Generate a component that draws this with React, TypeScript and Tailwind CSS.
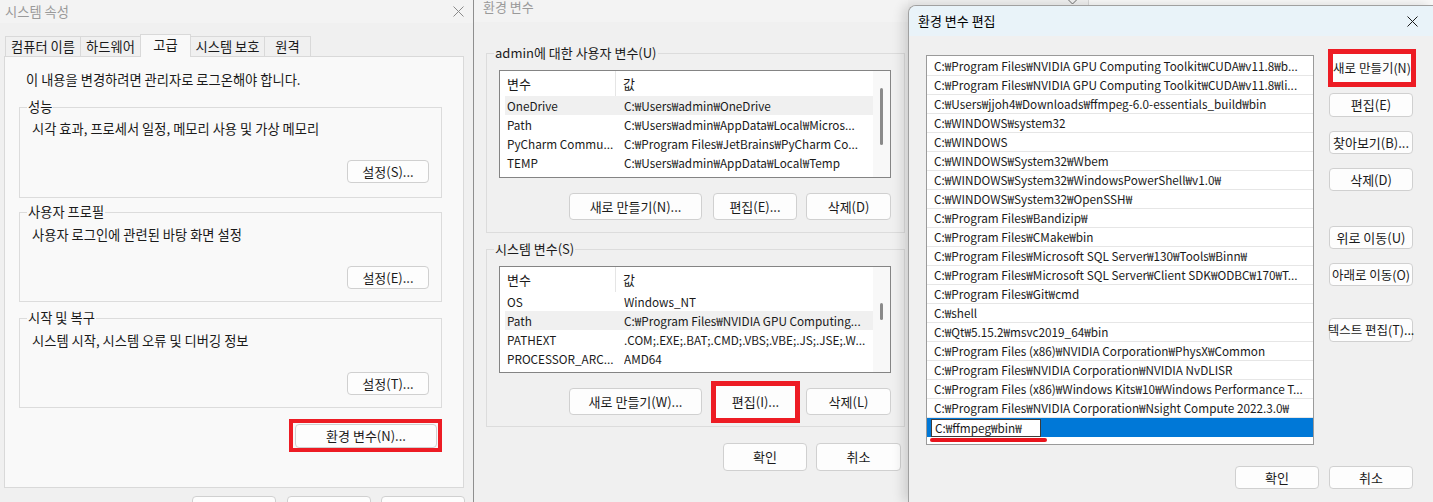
import React from "react";

type C = { className?: string; children?: React.ReactNode };

function Btn({ className = "", children }: C) {
  return (
    <div
      className={
        "flex shrink-0 items-center justify-center whitespace-nowrap rounded-[4px] border border-[#d0d0d0] bg-[#fdfdfd] leading-[18px] " +
        className
      }
    >
      {children}
    </div>
  );
}

function CloseX({ size, color }: { size: number; color: string }) {
  return (
    <svg width={size} height={size} viewBox="0 0 11 11" fill="none">
      <path d="M0.5 0.5L10.5 10.5M10.5 0.5L0.5 10.5" stroke={color} strokeWidth="1" />
    </svg>
  );
}

function Group({ legend, className = "", children }: C & { legend: string }) {
  return (
    <fieldset className={"border border-[#dcdcdc] " + className}>
      <legend className="-ml-[5px] px-[1px] leading-[18px]">{legend}</legend>
      {children}
    </fieldset>
  );
}

const perfGroups = [
  {
    legend: "성능",
    text: "시각 효과, 프로세서 일정, 메모리 사용 및 가상 메모리",
    btn: "설정(S)...",
    mt: "mt-[9px]",
    tmt: "mt-[4px]",
    pb: "pb-[14px]",
  },
  {
    legend: "사용자 프로필",
    text: "사용자 로그인에 관련된 바탕 화면 설정",
    btn: "설정(E)...",
    mt: "mt-[5px]",
    tmt: "mt-[5px]",
    pb: "pb-[12px]",
  },
  {
    legend: "시작 및 복구",
    text: "시스템 시작, 시스템 오류 및 디버깅 정보",
    btn: "설정(T)...",
    mt: "mt-[7px]",
    tmt: "mt-[5px]",
    pb: "pb-[12px]",
  },
];

const tabs = [
  { t: "컴퓨터 이름", w: "w-[76px]" },
  { t: "하드웨어", w: "w-[61px]" },
  { t: "고급", w: "w-[51px]", sel: true },
  { t: "시스템 보호", w: "w-[75px]" },
  { t: "원격", w: "w-[47px]" },
];

function LeftWindow() {
  return (
    <div className="h-full w-[473px] shrink-0 overflow-hidden bg-[#f0f0f0] text-[13.25px]">
      <div className="flex h-[23px] items-center justify-between bg-[#f3f3f3] pl-[5px] pr-[9px]">
        <span className="leading-[18px] text-[#9a9a9a]">시스템 속성</span>
        <CloseX size={11} color="#8a8a8a" />
      </div>
      <div className="pl-[4px] pt-[11px]">
        <div className="flex h-[22px] items-end pl-[1px]">
          {tabs.map((tab, i) =>
            tab.sel ? (
              <div
                key={i}
                className={
                  "relative z-10 -mb-[1px] -ml-[1px] flex h-[23px] items-center justify-center border-l border-r border-t border-[#d9d9d9] bg-[#f9f9f9] pb-[2px] leading-[18px] " +
                  tab.w
                }
              >
                {tab.t}
              </div>
            ) : (
              <div
                key={i}
                className={
                  "flex h-[20px] items-center justify-center border-l border-r border-t border-[#d9d9d9] bg-[#f0f0f0] leading-[18px] " +
                  (i > 0 ? "-ml-[1px] " : "") +
                  tab.w
                }
              >
                {tab.t}
              </div>
            )
          )}
        </div>
        <div className="h-[432px] w-[460px] border border-[#d9d9d9] bg-[#f9f9f9]">
          <div className="pl-[21px] pt-[14px] leading-[18px]">
            이 내용을 변경하려면 관리자로 로그온해야 합니다.
          </div>
          <div className="pl-[14px]">
            {perfGroups.map((g, i) => (
              <Group key={i} legend={g.legend} className={"w-[423px] pl-[12px] pr-[12px] " + g.mt + " " + g.pb}>
                <div className={"leading-[18px] " + g.tmt}>{g.text}</div>
                <div className="mt-[22px] flex justify-end">
                  <Btn className="h-[23px] w-[82px] text-[13px]">{g.btn}</Btn>
                </div>
              </Group>
            ))}
            <div className="mt-[11px] flex w-[423px] justify-end">
              <div className="flex h-[33px] w-[153px] items-center border-[4px] border-[#ed1c24] pl-[2px]">
                <Btn className="h-[24px] w-[142px] text-[13px]">환경 변수(N)...</Btn>
              </div>
            </div>
          </div>
        </div>
      </div>
      <div className="mt-[8px] flex pl-[192px] text-[13px]">
        <Btn className="h-[28px] w-[84px]">확인</Btn>
        <Btn className="ml-[11px] h-[28px] w-[84px]">취소</Btn>
        <Btn className="ml-[10px] h-[28px] w-[84px]">적용(A)</Btn>
      </div>
    </div>
  );
}

type Row = [string, string];

function VarList({
  rows,
  highlight,
  heightClass,
  thumbTop,
  thumbH,
}: {
  rows: Row[];
  highlight: number;
  heightClass: string;
  thumbTop: string;
  thumbH: string;
}) {
  return (
    <div className={"flex w-[392px] overflow-hidden border border-[#848484] bg-white " + heightClass}>
      <div className="min-w-0 flex-1 overflow-hidden">
        <div className="flex h-[25px] pl-[5px]">
          <div className="flex w-[111px] items-center border-r border-[#e5e5e5] pl-[2px] leading-[18px]">변수</div>
          <div className="flex items-center pl-[7px] leading-[18px]">값</div>
        </div>
        <div className="pl-[5px] text-[11.75px]">
          {rows.map((r, i) => (
            <div
              key={i}
              className={
                "flex h-[19px] items-center whitespace-nowrap leading-[18px] " + (i === highlight ? "bg-[#f0f0f0]" : "")
              }
            >
              <div className="w-[119px] shrink-0 overflow-hidden pl-[2px]">{r[0]}</div>
              <div className="overflow-hidden">{r[1]}</div>
            </div>
          ))}
        </div>
      </div>
      <div className={"w-[17px] shrink-0 bg-[#f8f8f8] " + thumbTop}>
        <div className={"ml-[7px] w-[3px] rounded-full bg-[#8a8a8a] " + thumbH} />
      </div>
    </div>
  );
}

const userRows: Row[] = [
  ["OneDrive", "C:₩Users₩admin₩OneDrive"],
  ["Path", "C:₩Users₩admin₩AppData₩Local₩Micros..."],
  ["PyCharm Commu...", "C:₩Program Files₩JetBrains₩PyCharm Co..."],
  ["TEMP", "C:₩Users₩admin₩AppData₩Local₩Temp"],
  ["TMP", "C:₩Users₩admin₩AppData₩Local₩Temp"],
];

const sysRows: Row[] = [
  ["OS", "Windows_NT"],
  ["Path", "C:₩Program Files₩NVIDIA GPU Computing..."],
  ["PATHEXT", ".COM;.EXE;.BAT;.CMD;.VBS;.VBE;.JS;.JSE;.W..."],
  ["PROCESSOR_ARC...", "AMD64"],
  ["PROCESSOR_IDE...", "Intel64 Family 6 Model 154 Stepping 3, ..."],
];

function MiddleWindow() {
  return (
    <div className="h-full w-[435px] shrink-0 overflow-hidden border-l border-[#8f8f8f] bg-[#f0f0f0]">
      <div className="h-[22px] bg-[#f3f3f3] pl-[9px] leading-[14px] text-[#9a9a9a]">환경 변수</div>
      <div className="pl-[12px]">
        <Group legend="admin에 대한 사용자 변수(U)" className="mt-[22px] w-[418px] pb-[12px] pl-[12px] pr-[13px]">
          <div className="mt-[8px]">
            <VarList rows={userRows} highlight={0} heightClass="h-[108px]" thumbTop="pt-[17px]" thumbH="h-[57px]" />
          </div>
          <div className="mt-[15px] flex h-[27px] items-center justify-end">
            <Btn className="h-[27px] w-[133px]">새로 만들기(N)...</Btn>
            <Btn className="ml-[11px] h-[27px] w-[84px]">편집(E)...</Btn>
            <Btn className="ml-[9px] h-[27px] w-[85px]">삭제(D)</Btn>
          </div>
        </Group>
        <Group legend="시스템 변수(S)" className="mt-[7px] w-[418px] pb-[11px] pl-[12px] pr-[13px]">
          <div className="mt-[8px]">
            <VarList rows={sysRows} highlight={1} heightClass="h-[107px]" thumbTop="pt-[36px]" thumbH="h-[17px]" />
          </div>
          <div className="mt-[15px] flex h-[27px] items-center justify-end">
            <Btn className="h-[27px] w-[133px]">새로 만들기(W)...</Btn>
            <div className="ml-[9px] flex h-[42px] w-[89px] shrink-0 items-center justify-center border-[5px] border-[#ed1c24] bg-[#fdfdfd] leading-[18px]">
              편집(I)...
            </div>
            <Btn className="ml-[6px] h-[27px] w-[85px]">삭제(L)</Btn>
          </div>
        </Group>
        <div className="mt-[16px] flex w-[418px] justify-end pr-[3px]">
          <Btn className="h-[28px] w-[84px]">확인</Btn>
          <Btn className="ml-[9px] h-[28px] w-[85px]">취소</Btn>
        </div>
      </div>
    </div>
  );
}

const pathRows = [
  "C:₩Program Files₩NVIDIA GPU Computing Toolkit₩CUDA₩v11.8₩b...",
  "C:₩Program Files₩NVIDIA GPU Computing Toolkit₩CUDA₩v11.8₩li...",
  "C:₩Users₩jjoh4₩Downloads₩ffmpeg-6.0-essentials_build₩bin",
  "C:₩WINDOWS₩system32",
  "C:₩WINDOWS",
  "C:₩WINDOWS₩System32₩Wbem",
  "C:₩WINDOWS₩System32₩WindowsPowerShell₩v1.0₩",
  "C:₩WINDOWS₩System32₩OpenSSH₩",
  "C:₩Program Files₩Bandizip₩",
  "C:₩Program Files₩CMake₩bin",
  "C:₩Program Files₩Microsoft SQL Server₩130₩Tools₩Binn₩",
  "C:₩Program Files₩Microsoft SQL Server₩Client SDK₩ODBC₩170₩T...",
  "C:₩Program Files₩Git₩cmd",
  "C:₩shell",
  "C:₩Qt₩5.15.2₩msvc2019_64₩bin",
  "C:₩Program Files (x86)₩NVIDIA Corporation₩PhysX₩Common",
  "C:₩Program Files₩NVIDIA Corporation₩NVIDIA NvDLISR",
  "C:₩Program Files (x86)₩Windows Kits₩10₩Windows Performance T...",
  "C:₩Program Files₩NVIDIA Corporation₩Nsight Compute 2022.3.0₩",
];

function RightWindow() {
  return (
    <div className="flex h-full min-w-0 flex-1 flex-col">
      <div className="flex h-[5px] shrink-0">
        <div className="flex w-[180px] justify-end bg-[#f0f0f0] pr-[10px]">
          <svg width="11" height="5" viewBox="0 0 11 5" fill="none">
            <path d="M0.5 -1L5.5 4L10.5 -1" stroke="#6f6f6f" strokeWidth="1" />
          </svg>
        </div>
        <div className="flex-1 border-l border-[#d8d8d8] bg-[#f9f9f9]" />
      </div>
      <div className="flex min-h-0 flex-1 flex-col overflow-hidden rounded-tl-[8px] border-l border-t border-[#a0a0a0] bg-[#f0f0f0] shadow-[-5px_0_12px_rgba(0,0,0,0.14)]">
        <div className="flex h-[30px] shrink-0 items-center justify-between bg-[#e9f3f9] pl-[9px] pr-[15px]">
          <span className="leading-[18px] text-black">환경 변수 편집</span>
          <CloseX size={11} color="#1a1a1a" />
        </div>
        <div className="flex shrink-0 pl-[17px] pt-[19px]">
          <div className="h-[390px] w-[388px] shrink-0 border border-[#9a9a9a] bg-white pt-[1px] text-[11.75px]">
            {pathRows.map((p, i) => (
              <div
                key={i}
                className="flex h-[19px] items-center overflow-hidden whitespace-nowrap border-b border-[#e6e6e6] pl-[7px] leading-[18px]"
              >
                {p}
              </div>
            ))}
            <div className="flex h-[19px] items-center bg-[#0078d7]">
              <div className="ml-[4px] flex h-[18px] w-[110px] items-center border border-[#3c3c3c] bg-white pl-[3px] leading-[16px]">
                C:₩ffmpeg₩bin₩
              </div>
            </div>
            <div className="ml-[3px] mt-[1px] h-[4px] w-[117px] rounded-full bg-[#e8141c]" />
          </div>
          <div className="ml-[14px] flex flex-col items-start">
            <div className="-mt-[6px] flex h-[38px] w-[88px] items-center justify-center whitespace-nowrap border-[5px] border-[#ed1c24] bg-[#fdfdfd] text-[12.5px] leading-[18px]">
              새로 만들기(N)
            </div>
            <Btn className="ml-[1px] mt-[6px] h-[24px] w-[84px]">편집(E)</Btn>
            <Btn className="ml-[1px] mt-[14px] h-[23px] w-[84px]">찾아보기(B)...</Btn>
            <Btn className="ml-[1px] mt-[14px] h-[23px] w-[84px]">삭제(D)</Btn>
            <Btn className="ml-[1px] mt-[35px] h-[23px] w-[84px]">위로 이동(U)</Btn>
            <Btn className="ml-[1px] mt-[14px] h-[23px] w-[84px] text-[12.5px]">아래로 이동(O)</Btn>
            <Btn className="ml-[1px] mt-[32px] h-[24px] w-[84px] text-[12.5px]">텍스트 편집(T)...</Btn>
          </div>
        </div>
        <div className="mt-[21px] flex shrink-0 justify-end pr-[20px]">
          <Btn className="h-[23px] w-[84px]">확인</Btn>
          <Btn className="ml-[10px] h-[23px] w-[84px]">취소</Btn>
        </div>
      </div>
    </div>
  );
}

export default function App() {
  return (
    <div className="flex h-[502px] w-[1433px] overflow-hidden bg-[#f0f0f0] font-['Noto_Sans_CJK_KR',sans-serif] text-[13px] text-[#1a1a1a]">
      <LeftWindow />
      <MiddleWindow />
      <RightWindow />
    </div>
  );
}
